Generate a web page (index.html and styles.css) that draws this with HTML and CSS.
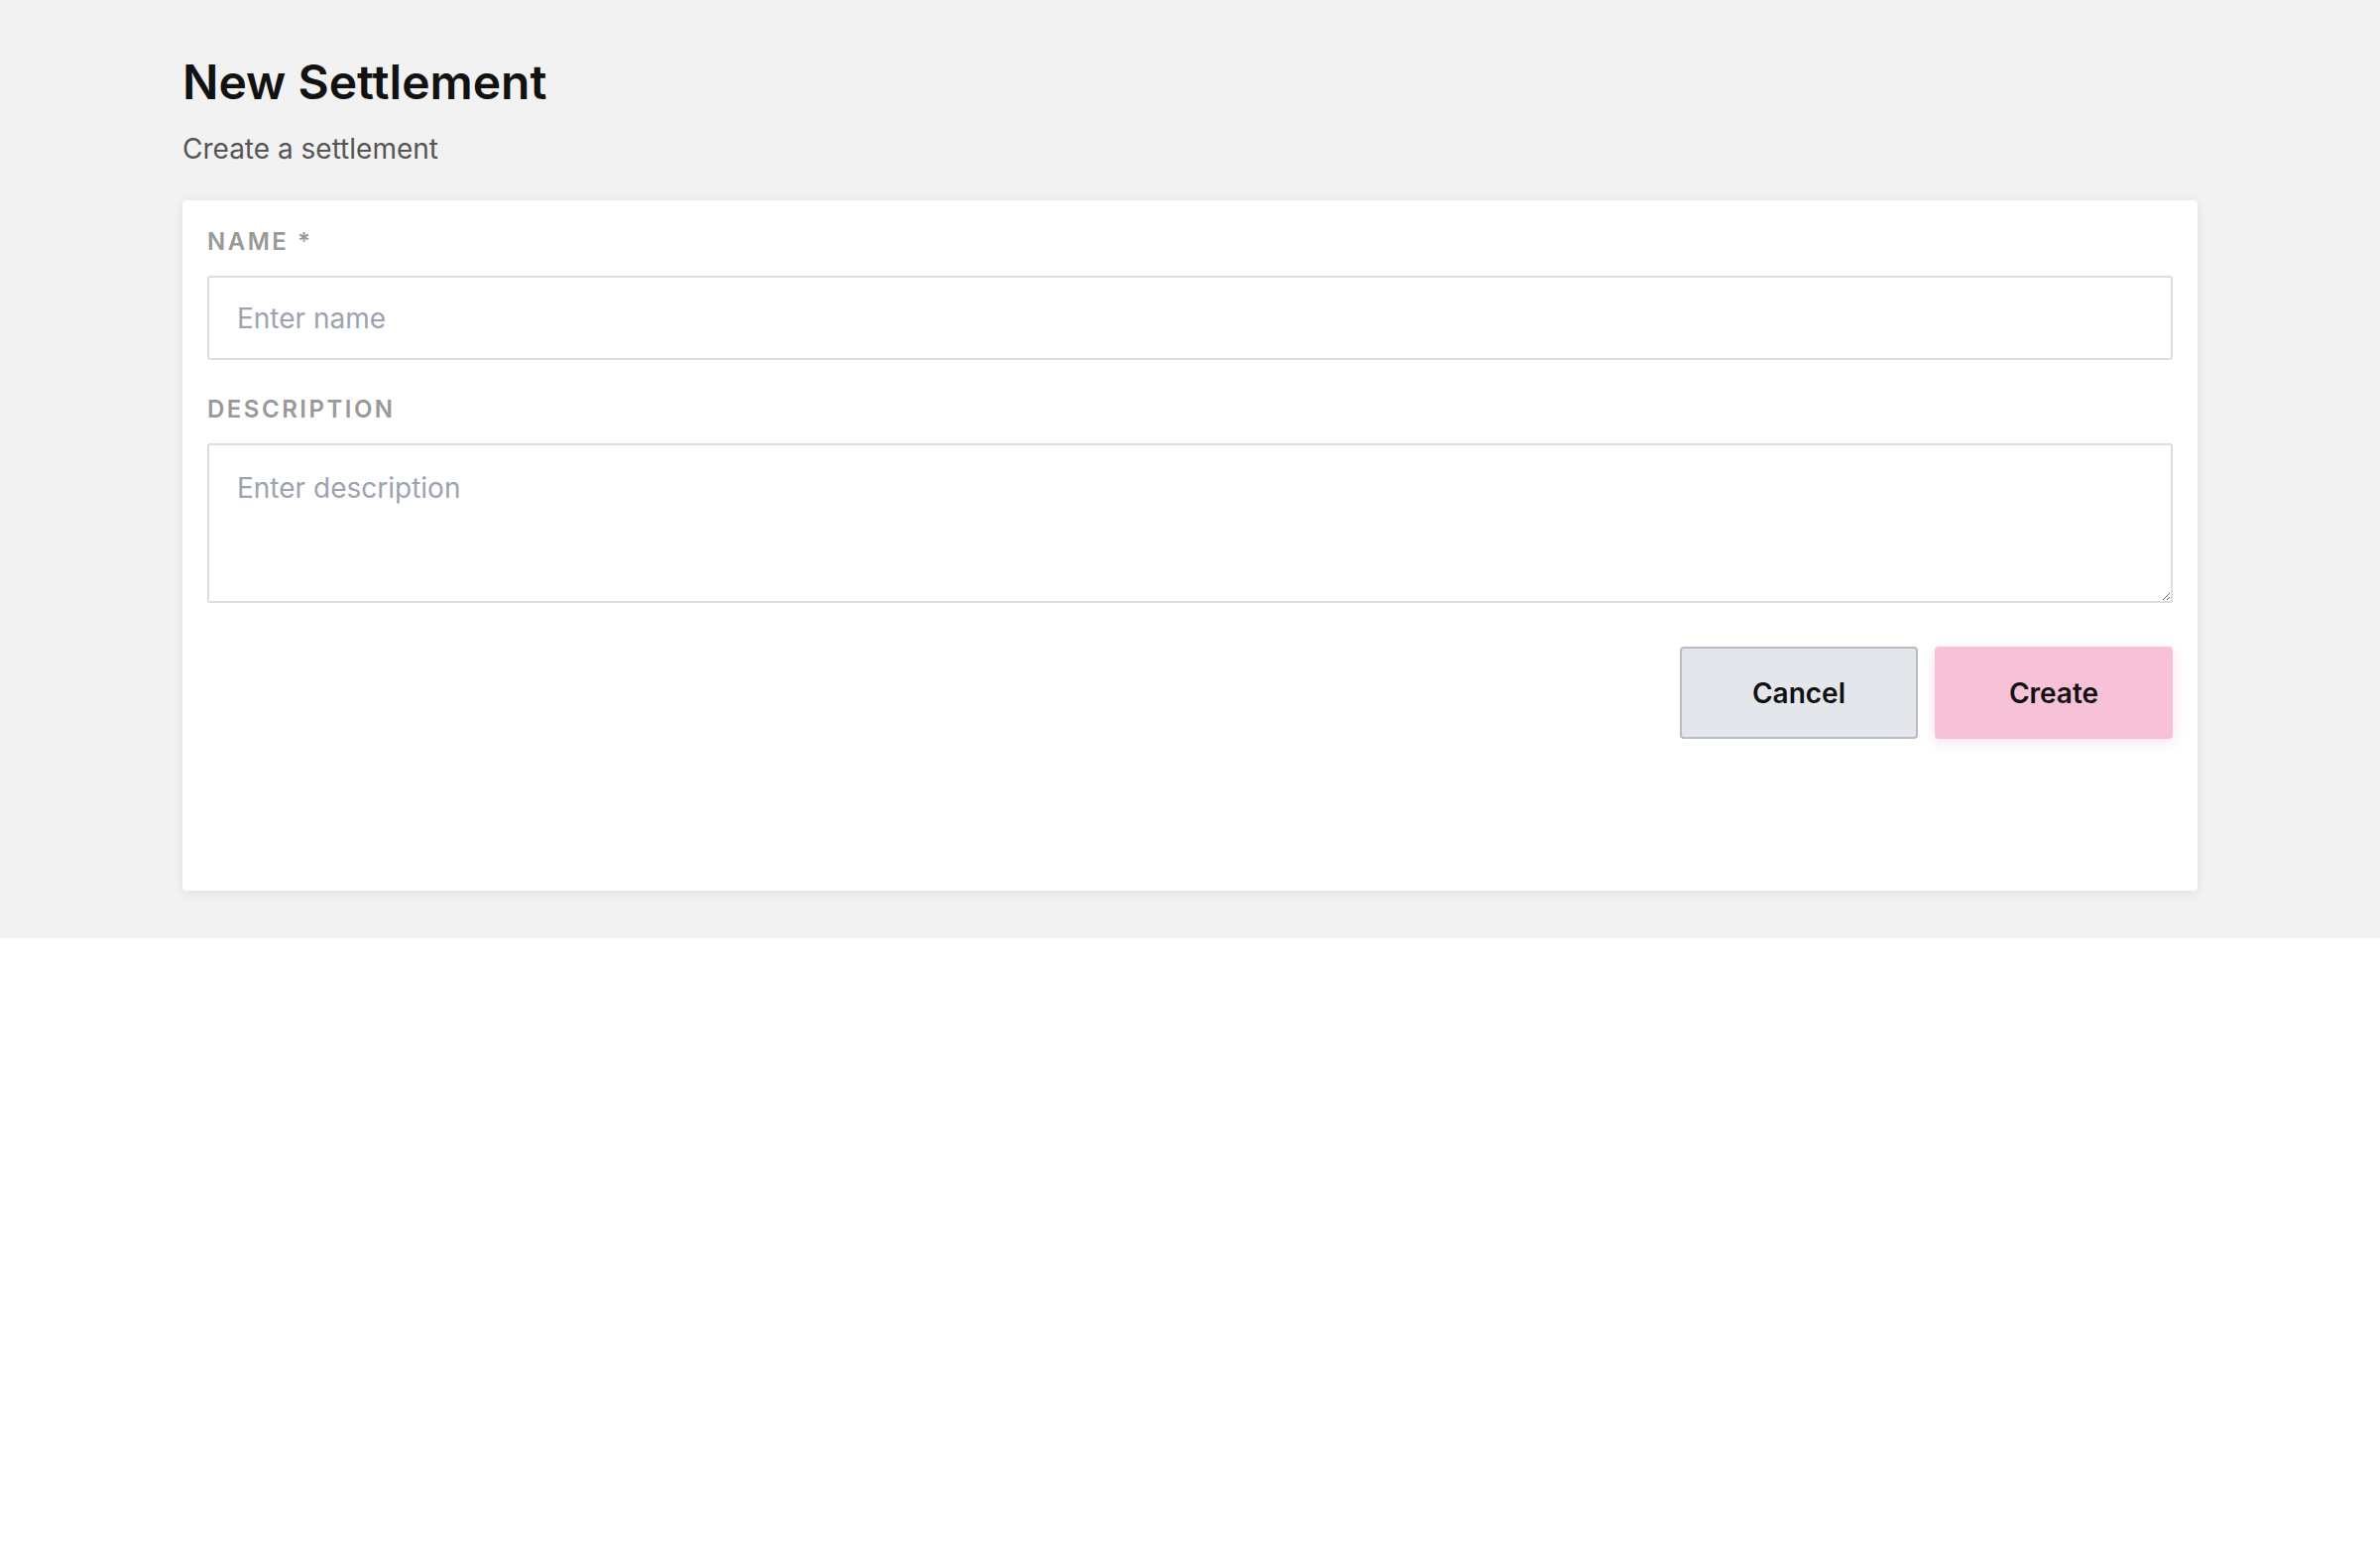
FILE: index.html
```html
<!DOCTYPE html>
<html lang="en">
<head>
    <meta charset="UTF-8">
    <meta name="viewport" content="width=device-width, initial-scale=1.0">
    <title>New Settlement</title>
    <link rel="stylesheet" href="styles.css">
</head>
<body>

    <div class="page">
        <h1 class="page-title">New Settlement</h1>
        <p class="page-subtitle">Create a settlement</p>

        <form class="card" onsubmit="return false">
            <div class="field">
                <label class="field-label" for="name">Name *</label>
                <input class="field-input" id="name" type="text" placeholder="Enter name">
            </div>

            <div class="field">
                <label class="field-label" for="description">Description</label>
                <textarea class="field-input field-textarea" id="description" placeholder="Enter description"></textarea>
            </div>

            <div class="actions">
                <button type="button" class="btn btn-cancel">Cancel</button>
                <button type="submit" class="btn btn-create">Create</button>
            </div>
        </form>
    </div>

</body>
</html>
```

FILE: styles.css
```css
/* Base */
body {
    margin: 0;
    background: white;
    font-family: Inter, "Noto Sans", sans-serif;
    color: #111;
}

.page {
    background: #f2f2f2;
    padding: 54px 184px 48px;
}

/* Header */
.page-title {
    margin: 0;
    font-size: 48px;
    font-weight: 600;
    line-height: 58px;
    color: #111;
}

.page-subtitle {
    margin: 21px 0 35px;
    font-size: 28px;
    line-height: 34px;
    color: #555;
}

/* Card */
.card {
    background: white;
    border-radius: 4px;
    box-shadow: 0 2px 12px rgba(0,0,0,0.08);
    padding: 27px 25px 153px;
}

.field {
    display: flex;
    flex-direction: column;
    gap: 20px;
    margin-bottom: 35px;
}

.field-label {
    font-size: 24px;
    line-height: 29px;
    font-weight: 600;
    letter-spacing: 2.5px;
    text-transform: uppercase;
    color: #999;
}

.field-input {
    box-sizing: border-box;
    width: 100%;
    height: 85px;
    padding: 0 28px;
    border: 2px solid #ddd;
    border-radius: 3px;
    font-family: inherit;
    font-size: 28px;
    color: #111;
    background: white;
    outline: none;
}

.field-input::placeholder {
    color: #9ca3af;
}

.field-textarea {
    height: 161px;
    padding: 26px 28px 20px;
    line-height: 34px;
    resize: vertical;
    display: block;
}

/* Actions */
.actions {
    display: flex;
    justify-content: flex-end;
    gap: 17px;
    margin-top: 44px;
}

.btn {
    width: 240px;
    height: 93px;
    border-radius: 4px;
    font-family: inherit;
    font-size: 28px;
    font-weight: 600;
    color: #111;
    cursor: pointer;
}

.btn-cancel {
    background: #e3e6eb;
    border: 2px solid #b9bcc2;
}

.btn-create {
    background: #f7c1d8;
    border: none;
    box-shadow: 0 4px 14px rgba(247,193,216,0.45);
}
```
